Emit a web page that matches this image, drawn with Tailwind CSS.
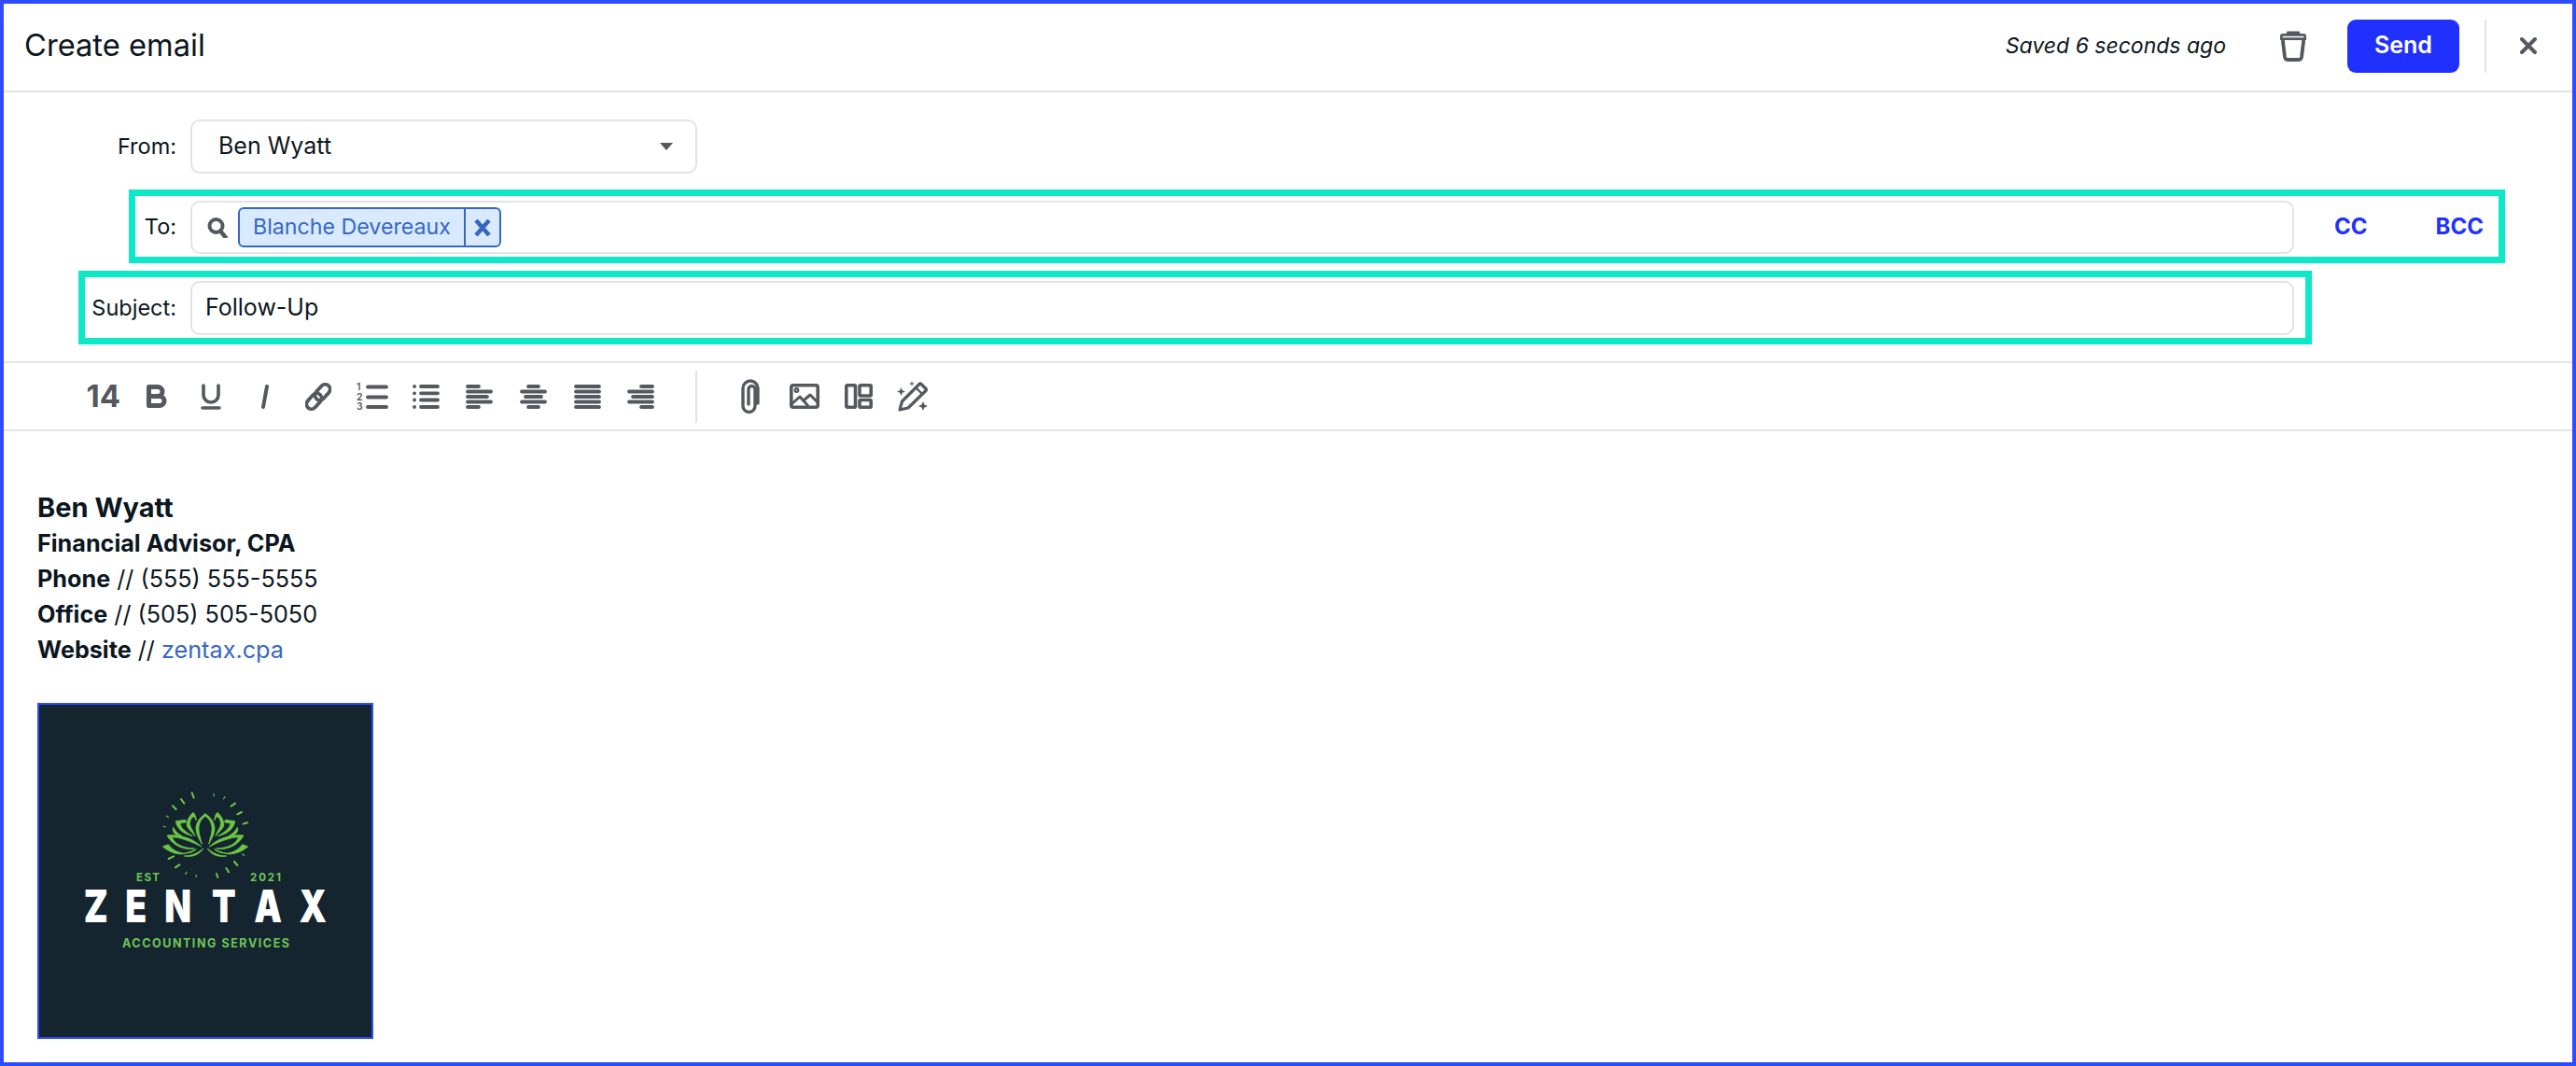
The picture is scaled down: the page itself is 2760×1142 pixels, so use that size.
<!DOCTYPE html>
<html lang="en">
  <head>
    <meta charset="UTF-8" />
    <title>Create email</title>
    <script src="https://cdn.jsdelivr.net/npm/@tailwindcss/browser@4"></script>
  </head>
  <body class="bg-white font-['Inter',sans-serif] text-[#0b1620] antialiased">
    <div class="h-[1142px] w-[2760px] overflow-hidden border-4 border-[#2f4bff] bg-white">
      <!-- header -->
      <header class="flex h-[95px] items-center border-b-2 border-[#e2e3e5] pb-[3px] pl-[22px] pr-[38px]">
        <h1 class="-mt-[2px] text-[32.7px] leading-none">Create email</h1>
        <span class="ml-auto text-[23px] italic">Saved 6 seconds ago</span>
        <svg class="ml-[57px] h-[34px] w-[30px] text-[#55585f]" viewBox="0 0 30 34" fill="none" stroke="currentColor" stroke-linejoin="round">
          <path d="M1 11V6.500C1 5 2 4 3.500 4H7.500L8.500 1.500H21.500L22.500 4H26.500C28 4 29 5 29 6.500V11Z" fill="currentColor" stroke="none"/>
          <path d="M3.500 7.500H26.500" stroke="#fff" stroke-width="1.500"/>
          <path d="M3.800 11 6 29C6.300 31 7.300 32 9 32H21C22.700 32 23.700 31 24 29L26.200 11" stroke-width="3.800"/>
        </svg>
        <button class="ml-[43px] h-[57px] w-[120px] rounded-[9px] bg-[#2030ff] text-[25px] font-semibold text-white">Send</button>
        <div class="ml-[27px] h-[57px] w-[2px] bg-[#e2e3e5]"></div>
        <svg class="ml-[36px] h-[18px] w-[18px] text-[#55585f]" viewBox="0 0 18 18" fill="none" stroke="currentColor" stroke-width="4" stroke-linecap="round"><path d="M2 2l14 14M16 2 2 16"/></svg>
      </header>

      <!-- address fields -->
      <section class="h-[288px]">
        <div class="flex items-center pt-[29px]">
          <label class="w-[185px] text-right text-[23.5px]">From:</label>
          <div class="ml-[15px] flex h-[58px] w-[543px] items-center rounded-[10px] border-2 border-[#e2e3e5] pl-[28px] pr-[24px] text-[25px]">
            Ben Wyatt
            <span class="ml-auto h-0 w-0 border-x-[7px] border-t-[8px] border-x-transparent border-t-[#55585f]"></span>
          </div>
        </div>
        <div class="ml-[134px] mt-[17px] flex h-[79px] w-[2546px] items-center border-[7px] border-[#0de8c9]">
          <label class="w-[44px] text-right text-[23.5px]">To:</label>
          <div class="ml-[15px] mt-[2px] flex h-[57px] w-[2254px] items-center rounded-[10px] border-2 border-[#e2e3e5] pl-[16px]">
            <svg class="h-[22px] w-[22px] text-[#55585f]" viewBox="0 0 22 22" fill="none" stroke="currentColor" stroke-width="4"><circle cx="9.500" cy="9" r="7"/><path d="M14.500 15l5 6" stroke-linecap="round" stroke-width="4.500"/></svg>
            <div class="ml-[11px] flex h-[43px] w-[282px] items-center rounded-[6px] border-2 border-[#3667c4] bg-[#d9eafe] text-[23.2px] text-[#3667c4]">
              <span class="w-[240px] whitespace-nowrap pl-[14px]">Blanche Devereaux</span>
              <span class="flex h-full flex-1 items-center justify-center border-l-2 border-[#3667c4]">
                <svg class="h-[18px] w-[18px]" viewBox="0 0 18 18" fill="none" stroke="currentColor" stroke-width="4.500"><path d="M2 1l14 16M16 1 2 17"/></svg>
              </span>
            </div>
          </div>
          <span class="ml-[43px] text-[24px] font-bold text-[#2030ff]">CC</span>
          <span class="ml-[73px] text-[24px] font-bold text-[#2030ff]">BCC</span>
        </div>
        <div class="ml-[80px] mt-[8px] flex h-[79px] w-[2393px] items-center border-[7px] border-[#0de8c9]">
          <label class="w-[98px] text-right text-[23.5px]">Subject:</label>
          <div class="ml-[15px] mt-[1px] flex h-[58px] w-[2254px] items-center rounded-[10px] border-2 border-[#e2e3e5] pl-[14px] text-[25px]">Follow-Up</div>
        </div>
      </section>

      <!-- toolbar -->
      <div class="flex h-[75px] items-center border-y-2 border-[#e2e3e5] pl-[78px] text-[#55585f]">
        <span class="flex w-[57.6px] justify-center text-[33px] font-bold leading-none">14</span>
        <span class="flex w-[57.6px] justify-center">
          <svg class="h-[25px] w-[22px]" viewBox="0 0 22 25" fill="none" stroke="currentColor" stroke-width="5" stroke-linejoin="round"><path d="M2.500 2.500H12a5 5 0 0 1 0 10H2.500ZM2.500 12.500H14a5 5 0 0 1 0 10H2.500Z"/></svg>
        </span>
        <span class="flex w-[57.6px] justify-center">
          <svg class="h-[28px] w-[22px]" viewBox="0 0 22 28" fill="none" stroke="currentColor" stroke-width="3.600" stroke-linecap="round"><path d="M3 2v10a8 8 0 0 0 16 0V2M2 26h18"/></svg>
        </span>
        <span class="flex w-[57.6px] justify-center">
          <svg class="h-[26px] w-[8px]" viewBox="0 0 8 26" fill="none" stroke="currentColor" stroke-width="4" stroke-linecap="round"><path d="M6 2 2 24"/></svg>
        </span>
        <span class="flex w-[57.6px] justify-center">
          <svg class="h-[30px] w-[28px]" viewBox="0 0 28 30" fill="none" stroke="currentColor" stroke-width="3.800"><rect x="9" y="5" width="19" height="10.500" rx="5.250" transform="rotate(-48 18.500 10.250)"/><rect x="0" y="14.500" width="19" height="10.500" rx="5.250" transform="rotate(-48 9.500 19.750)"/></svg>
        </span>
        <span class="flex w-[57.6px] justify-center">
          <svg class="h-[38px] w-[34px]" viewBox="0 -4 34 38" fill="none" stroke="currentColor" stroke-width="3.800" stroke-linecap="round"><path d="M12 4.500h20M12 15.500h20M12 26h20"/><g fill="currentColor" stroke="none" font-size="10.500" font-weight="600" font-family="Inter"><text x="0" y="8">1</text><text x="0" y="18.500">2</text><text x="0" y="29">3</text></g></svg>
        </span>
        <span class="flex w-[57.6px] justify-center">
          <svg class="h-[26px] w-[29px]" viewBox="0 0 29 26" fill="none" stroke="currentColor" stroke-width="3.800" stroke-linecap="round"><path d="M9 2h18M9 9.300h18M9 16.500h18M9 24h18"/><path d="M2 2h.1M2 9.300h.1M2 16.500h.1M2 24h.1"/></svg>
        </span>
        <span class="flex w-[57.6px] justify-center">
          <svg class="h-[26px] w-[29px]" viewBox="0 0 29 26" fill="none" stroke="currentColor" stroke-width="3.800" stroke-linecap="round"><path d="M2 2h12M2 7.500h25M2 13h21M2 18.500h25M2 24h12"/></svg>
        </span>
        <span class="flex w-[57.6px] justify-center">
          <svg class="h-[26px] w-[29px]" viewBox="0 0 29 26" fill="none" stroke="currentColor" stroke-width="3.800" stroke-linecap="round"><path d="M9 2h11M2 7.500h25M6 13h17M2 18.500h25M9 24h11"/></svg>
        </span>
        <span class="flex w-[57.6px] justify-center">
          <svg class="h-[26px] w-[29px]" viewBox="0 0 29 26" fill="none" stroke="currentColor" stroke-width="3.800" stroke-linecap="round"><path d="M2 2h25M2 7.500h25M2 13h25M2 18.500h25M2 24h25"/></svg>
        </span>
        <span class="flex w-[57.6px] justify-center">
          <svg class="h-[26px] w-[29px]" viewBox="0 0 29 26" fill="none" stroke="currentColor" stroke-width="3.800" stroke-linecap="round"><path d="M15 2h12M2 7.500h25M6 13h21M2 18.500h25M15 24h12"/></svg>
        </span>
        <div class="ml-[29px] h-[56px] w-[2px] bg-[#e2e3e5]"></div>
        <span class="ml-[29px] flex w-[57.6px] justify-center">
          <svg class="h-[38px] w-[20px]" viewBox="0 0 20 38" fill="none" stroke="currentColor" stroke-width="3.400" stroke-linecap="round"><path d="M18 26V10A8 8 0 0 0 2 10V29a6.500 6.500 0 0 0 13 0V11a3.500 3.500 0 0 0-7 0V27"/></svg>
        </span>
        <span class="flex w-[57.6px] justify-center">
          <svg class="h-[27px] w-[32px]" viewBox="0 0 32 27" fill="none" stroke="currentColor" stroke-width="3.600" stroke-linejoin="round"><rect x="1.800" y="1.800" width="28.400" height="23.400" rx="2"/><circle cx="7.500" cy="7" r="1.800" stroke-width="2.200"/><path d="M2 22 11 14 20 24M15 18l7-6 8 8" stroke-width="3"/></svg>
        </span>
        <span class="flex w-[57.6px] justify-center">
          <svg class="h-[27px] w-[30px]" viewBox="0 0 30 27" fill="none" stroke="currentColor" stroke-width="3.600" stroke-linejoin="round"><rect x="1.800" y="1.800" width="9.700" height="23.400" rx="1"/><rect x="16" y="1.800" width="12.200" height="11.200" rx="1"/><rect x="16" y="17.500" width="12.200" height="7.700" rx="1"/></svg>
        </span>
        <span class="flex w-[57.6px] justify-center">
          <svg class="h-[33px] w-[33px]" viewBox="0 0 33 33" fill="none" stroke="currentColor" stroke-width="3.200" stroke-linejoin="round"><path d="M3 31 5.500 22 24 3.500Q25 2.500 26 3.500L31 8.500Q32 9.500 31 10.500L12 29Z"/><path d="M20.500 7.500 27 14" stroke-width="2.400"/><g fill="currentColor" stroke="none"><path d="M4.500 7 5.800 10.200 9 11.500 5.800 12.800 4.500 16 3.200 12.800 0 11.500 3.200 10.200Z"/><path d="M16 0 16.700 2.300 19 3 16.700 3.700 16 6 15.300 3.700 13 3 15.300 2.300Z"/><path d="M28 22 29.500 25.500 33 27 29.500 28.500 28 32 26.500 28.500 23 27 26.500 25.500Z"/></g></svg>
        </span>
      </div>

      <!-- signature -->
      <main class="pl-[36px] pt-[63px]">
        <p class="text-[29px] font-bold leading-[38px]">Ben Wyatt</p>
        <p class="text-[25.2px] font-bold leading-[38px]">Financial Advisor, CPA</p>
        <p class="text-[25.2px] leading-[38px]"><b class="font-bold">Phone</b> // (555) 555-5555</p>
        <p class="text-[25.2px] leading-[38px]"><b class="font-bold">Office</b> // (505) 505-5050</p>
        <p class="text-[25.2px] leading-[38px]"><b class="font-bold">Website</b> // <a class="text-[#3667c4]">zentax.cpa</a></p>
        <div class="mt-[38px] w-[360px] border-2 border-[#2f4bff] bg-[#142530]">
          <svg class="block h-[356px] w-[356px]" viewBox="42 755 356 356">
            <rect x="42" y="755" width="356" height="356" fill="#142530"/>
            <!-- rays, drawn in a 3x crop of the logo -->
            <g transform="translate(60 820) scale(.3333)" stroke="#6cc644" stroke-linecap="round" fill="none">
              <path stroke-width="6" d="M437 88 443 104M402 108 412 122M375 130 386 141M563 131 576 122M583 157 597 150M602 188 615 184M573 309 583 321M547 330 555 343M516 348 520 360M384 328 397 319M362 300 378 292"/>
              <path stroke-width="3.500" d="M355 162 361 166M346 196 352 198M507 91 508 99M539 107 543 101M599 285 605 289M451 352 450 358M416 349 420 343"/>
            </g>
            <!-- lotus, left half mirrored -->
            <g transform="translate(165 845) scale(.3333)" fill="#6cc644" stroke="#6cc644" stroke-width="2.500" stroke-linejoin="round">
              <g id="petals">
                <path d="M165 80C148 92 134 110 135 130 137 150 147 165 154 178 149 155 142 140 144 122 146 106 154 95 165 88Z"/>
                <path d="M126 76C113 88 104 104 106 120 112 132 125 142 132 152 126 132 112 122 116 106 118 96 124 88 130 90L136 102C135 90 132 82 126 76Z"/>
                <path d="M70 104 101 100 103 108 85 110C82 122 100 138 124 152 96 146 72 128 70 104Z"/>
                <path d="M62 124C58 135 64 146 78 152L90 152C78 146 68 136 62 124Z"/>
                <path d="M42 150C72 146 122 155 152 186 126 172 100 163 76 157L58 155C64 176 92 191 130 192 100 199 60 184 42 150Z"/>
                <path d="M28 186 46 179C58 196 78 207 102 208 76 214 50 204 28 186Z"/>
                <path d="M158 192C150 207 128 222 97 216 120 216 140 208 158 192Z"/>
                <path d="M136 194C128 202 114 208 100 207 112 204 124 200 136 194Z"/>
              </g>
              <use href="#petals" transform="translate(330 0) scale(-1 1)"/>
            </g>
            <g font-family="Inter" fill="#6fc654" font-weight="700">
              <text x="146" y="944" font-size="11.500" textLength="25">EST</text>
              <text x="268" y="944" font-size="11.500" textLength="33">2021</text>
              <text x="131" y="1015" font-size="12.500" textLength="179">ACCOUNTING SERVICES</text>
            </g>
            <g transform="translate(0 988) scale(.78 1)">
              <text x="115 172 226 291 349 411" y="0" font-family="Inter" font-size="48" font-weight="900" fill="#fff">ZENTAX</text>
            </g>
          </svg>
        </div>
      </main>
    </div>
  </body>
</html>
